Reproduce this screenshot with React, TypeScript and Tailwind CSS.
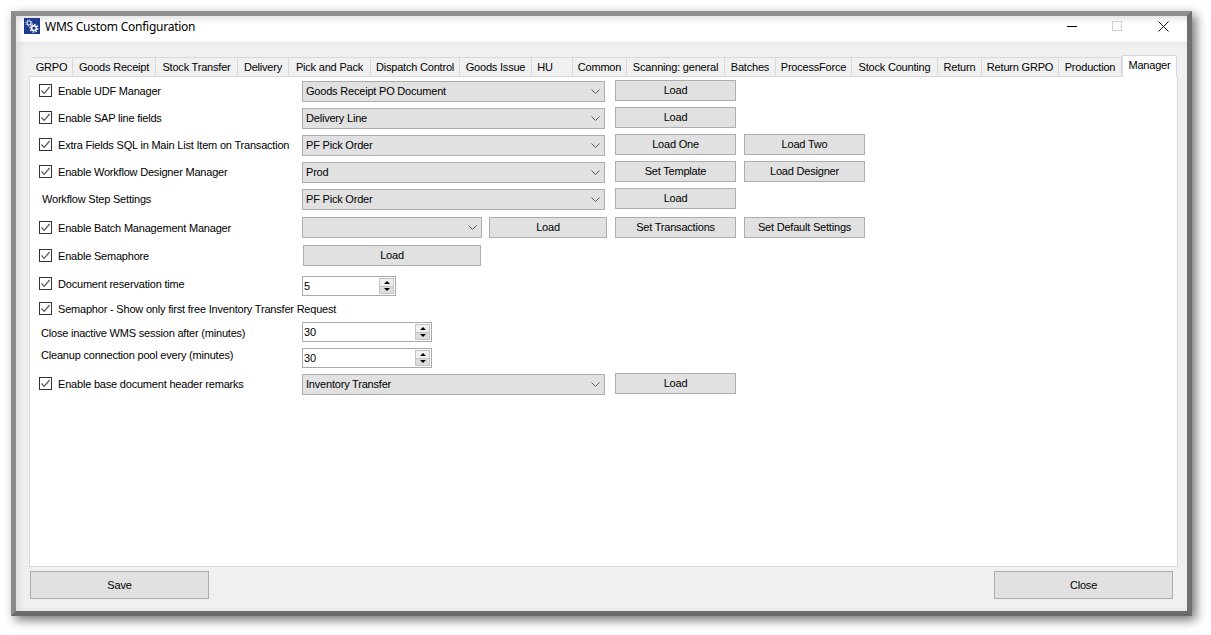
import type { ReactNode } from "react";

const tabs = [
  { label: "GRPO", width: "w-[42px]" },
  { label: "Goods Receipt", width: "w-[83px]" },
  { label: "Stock Transfer", width: "w-[82px]" },
  { label: "Delivery", width: "w-[51px]" },
  { label: "Pick and Pack", width: "w-[82px]" },
  { label: "Dispatch Control", width: "w-[89px]" },
  { label: "Goods Issue", width: "w-[72px]" },
  { label: "HU", width: "w-[41px] pr-[14px]" },
  { label: "Common", width: "w-[54px]" },
  { label: "Scanning: general", width: "w-[98px]" },
  { label: "Batches", width: "w-[51px]" },
  { label: "ProcessForce", width: "w-[76px]" },
  { label: "Stock Counting", width: "w-[86px]" },
  { label: "Return", width: "w-[44px]" },
  { label: "Return GRPO", width: "w-[77px]" },
  { label: "Production", width: "w-[63px]" },
];

function Chevron() {
  return (
    <svg width="9" height="5" viewBox="0 0 9 5" fill="none" stroke="#5a5a5a" strokeWidth="1">
      <path d="M0.5 0.5 L4.5 4.5 L8.5 0.5" />
    </svg>
  );
}

function Btn({ children, width = "w-[121px]" }: { children: ReactNode; width?: string }) {
  return (
    <div className={`flex h-[21px] shrink-0 items-center justify-center border border-[#adadad] bg-[#e1e1e1] ${width}`}>
      {children}
    </div>
  );
}

function Combo({ value, width = "w-[303px] mt-px" }: { value?: string; width?: string }) {
  return (
    <div className={`flex h-[21px] shrink-0 items-center justify-between border border-[#adadad] bg-[#e1e1e1] pl-[3px] pr-[4px] ${width}`}>
      <span>{value}</span>
      <Chevron />
    </div>
  );
}

function Spin({ value, width }: { value: string; width: string }) {
  return (
    <div className={`flex h-5 shrink-0 items-center justify-between border border-[#a9a9a9] bg-white pl-px pr-px ${width}`}>
      <span>{value}</span>
      <div className="flex h-4 w-[15px] flex-col">
        <div className="flex flex-1 items-center justify-center border border-[#c4c4c4] bg-[#f0f0f0]">
          <div className="h-0 w-0 border-x-[3px] border-b-[3px] border-x-transparent border-b-black" />
        </div>
        <div className="flex flex-1 items-center justify-center border border-t-0 border-[#c4c4c4] bg-[#dcdcdc]">
          <div className="h-0 w-0 border-x-[3px] border-t-[3px] border-x-transparent border-t-black" />
        </div>
      </div>
    </div>
  );
}

function Check({ label, className = "h-full" }: { label: string; className?: string }) {
  return (
    <div className={`flex w-[263px] shrink-0 items-center gap-[6px] ${className}`}>
      <div className="flex h-[13px] w-[13px] shrink-0 items-center justify-center border border-[#333] bg-white">
        <svg width="11" height="11" viewBox="0 0 11 11" fill="none" stroke="#555" strokeWidth="1.2">
          <path d="M1.5 5.5 L4.2 8.3 L9.6 2" />
        </svg>
      </div>
      <span className="whitespace-nowrap pt-px">{label}</span>
    </div>
  );
}

function Plain({ label, indent }: { label: string; indent: string }) {
  return <div className={`flex h-full w-[263px] shrink-0 items-center whitespace-nowrap ${indent}`}>{label}</div>;
}

function Row({ children, className = "" }: { children: ReactNode; className?: string }) {
  return <div className={`flex h-[21px] items-start ${className}`}>{children}</div>;
}

export default function App() {
  return (
    <div className="h-[635px] w-[1211px] overflow-hidden bg-white pl-[11px] pt-[11px] font-['Liberation_Sans',sans-serif] text-[11px] tracking-[-0.2px] text-black">
      <div className="flex h-[605px] w-[1181px] flex-col border-[5px] border-b-[#6b6b6b] border-l-[#8a8a8a] border-r-[#707070] border-t-[#8f8f8f] bg-[#f0f0f0] shadow-[4px_4px_10px_rgba(0,0,0,0.55)]">
        {/* title bar */}
        <div className="flex h-[26px] shrink-0 items-center bg-white pb-[6px] pl-2 pr-[18px] shadow-[inset_3px_3px_6px_rgba(0,0,0,0.12)]">
          <svg width="16" height="16" viewBox="0 0 16 16" className="shrink-0">
            <rect width="16" height="16" fill="#1d3a8f" />
            <circle cx="5" cy="5" r="2" fill="none" stroke="#dfe6f5" strokeWidth="1.2" />
            <circle cx="5" cy="5" r="3.1" fill="none" stroke="#dfe6f5" strokeWidth="1" strokeDasharray="1.2 1.2" />
            <circle cx="10" cy="10.2" r="2.4" fill="none" stroke="#fff" strokeWidth="1.5" />
            <circle cx="10" cy="10.2" r="3.9" fill="none" stroke="#fff" strokeWidth="1.3" strokeDasharray="1.5 1.5" />
          </svg>
          <span className="ml-[5px] pt-[2px] font-['Noto_Sans',sans-serif] text-[12px] tracking-[-0.25px]">WMS Custom Configuration</span>
          <div className="ml-auto flex items-center">
            <div className="h-px w-[10px] bg-black" />
            <div className="ml-[35px] h-[10px] w-[10px] border border-[#cfcfcf]" />
            <svg width="11" height="11" viewBox="0 0 11 11" fill="none" stroke="#111" strokeWidth="1" className="ml-9">
              <path d="M0.5 0.5 L10.5 10.5 M10.5 0.5 L0.5 10.5" />
            </svg>
          </div>
        </div>

        <div className="flex-1 shadow-[inset_4px_0_6px_rgba(0,0,0,0.07)]">
          {/* tabs */}
          <div className="ml-[15px] mt-[13px] flex h-[21px] items-end">
            {tabs.map((t) => (
              <div
                key={t.label}
                className={`flex h-[19px] items-center justify-center whitespace-nowrap border-r border-t border-[#d9d9d9] ${t.width}`}
              >
                {t.label}
              </div>
            ))}
            <div className="z-10 -mb-px flex h-[22px] w-[55px] items-center justify-center border-x border-t border-[#d9d9d9] bg-white pb-[2px]">
              Manager
            </div>
          </div>

          {/* panel */}
          <div className="ml-[13px] h-[491px] w-[1149px] border border-[#d9d9d9] bg-white pl-[9px] pt-[3px]">
            <Row>
              <Check label="Enable UDF Manager" />
              <Combo value="Goods Receipt PO Document" />
              <div className="ml-[10px]"><Btn>Load</Btn></div>
            </Row>
            <Row className="mt-[6px]">
              <Check label="Enable SAP line fields" />
              <Combo value="Delivery Line" />
              <div className="ml-[10px]"><Btn>Load</Btn></div>
            </Row>
            <Row className="mt-[6px]">
              <Check label="Extra Fields SQL in Main List Item on Transaction" />
              <Combo value="PF Pick Order" />
              <div className="ml-[10px] flex gap-2">
                <Btn>Load One</Btn>
                <Btn>Load Two</Btn>
              </div>
            </Row>
            <Row className="mt-[6px]">
              <Check label="Enable Workflow Designer Manager" />
              <Combo value="Prod" />
              <div className="ml-[10px] flex gap-2">
                <Btn>Set Template</Btn>
                <Btn>Load Designer</Btn>
              </div>
            </Row>
            <Row className="mt-[6px]">
              <Plain label="Workflow Step Settings" indent="pl-[3px] pt-px" />
              <Combo value="PF Pick Order" />
              <div className="ml-[10px]"><Btn>Load</Btn></div>
            </Row>
            <Row className="mt-2">
              <Check label="Enable Batch Management Manager" />
              <Combo width="w-[180px]" />
              <div className="ml-[7px]"><Btn width="w-[118px]">Load</Btn></div>
              <div className="ml-2 flex gap-2">
                <Btn>Set Transactions</Btn>
                <Btn>Set Default Settings</Btn>
              </div>
            </Row>
            <Row className="mt-[7px]">
              <Check label="Enable Semaphore" />
              <div className="ml-px"><Btn width="w-[178px]">Load</Btn></div>
            </Row>
            <Row className="mt-[10px]">
              <Check label="Document reservation time" className="h-full pb-[6px]" />
              <Spin value="5" width="w-[94px]" />
            </Row>
            <Row className="mt-px">
              <Check label="Semaphor - Show only first free Inventory Transfer Request" />
            </Row>
            <Row className="mt-[3px]">
              <Plain label="Close inactive WMS session after (minutes)" indent="pl-[2px] pt-px" />
              <Spin value="30" width="w-[130px]" />
            </Row>
            <Row className="mt-[5px]">
              <Plain label="Cleanup connection pool every (minutes)" indent="pl-[2px] pb-[6px]" />
              <Spin value="30" width="w-[130px]" />
            </Row>
            <Row className="mt-1">
              <Check label="Enable base document header remarks" />
              <Combo value="Inventory Transfer" />
              <div className="ml-[10px]"><Btn>Load</Btn></div>
            </Row>
          </div>

          {/* footer */}
          <div className="ml-[14px] mt-1 flex w-[1143px] justify-between">
            <div className="flex h-7 w-[179px] items-center justify-center border border-[#adadad] bg-[#e1e1e1]">Save</div>
            <div className="flex h-7 w-[179px] items-center justify-center border border-[#adadad] bg-[#e1e1e1]">Close</div>
          </div>
        </div>
      </div>
    </div>
  );
}
